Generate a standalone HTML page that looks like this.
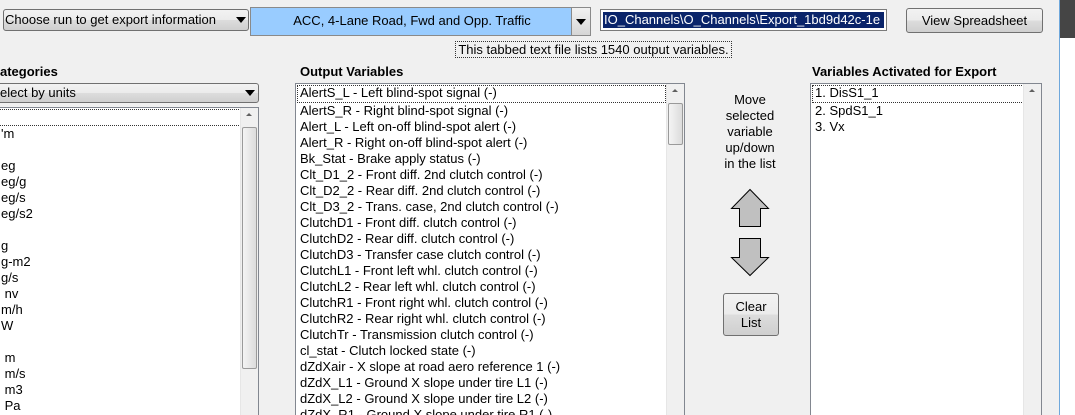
<!DOCTYPE html>
<html style="overflow:hidden;width:1075px;height:415px"><head><style>
body{margin:0;width:1075px;height:415px;overflow:hidden;background:#f0f0f0;font-family:"Liberation Sans",sans-serif;font-size:13px;color:#000;position:relative}
.a{position:absolute;box-sizing:border-box}
.btn{border:1px solid #707070;border-radius:3px;background:linear-gradient(#f2f2f2 0,#ebebeb 50%,#dddddd 50%,#cfcfcf 100%);text-align:center}
.lb{background:#fff;border:1px solid #828790;overflow:hidden}
.sb{position:absolute;top:0;bottom:0;right:0;width:17px;background:#f0f0f0;border-left:1px solid #e6e6e6}
.thumb{position:absolute;left:1px;right:1px;border:1px solid #9a9a9a;border-radius:2px;background:linear-gradient(90deg,#f4f4f4,#dcdcdc)}
.up{position:absolute;top:5px;left:5px;width:0;height:0;border-left:3px solid transparent;border-right:3px solid transparent;border-bottom:3px solid #606060}
.row{height:16px;line-height:16px;white-space:nowrap}
.h{font-weight:bold;font-size:13px}
.tri{position:absolute;width:0;height:0;border-left:5px solid transparent;border-right:5px solid transparent;border-top:6px solid #000}
</style></head><body>
<div class="a btn" style="left:3px;top:9px;width:246px;height:22px;text-align:left;padding-left:1px;line-height:20px;font-size:13px">Choose run to get export information<div class="tri" style="left:232px;top:7px"></div></div>
<div class="a" style="left:250px;top:7px;width:341px;height:29px;border:1px solid #8a8a8a;background:#99ccff"><div style="position:absolute;left:0;width:322px;text-align:center;line-height:26px;font-size:13px">ACC, 4-Lane Road, Fwd and Opp. Traffic</div><div style="position:absolute;right:0;top:0;width:18px;height:27px;background:linear-gradient(#f2f2f2,#d6d6d6);border-left:1px solid #8a8a8a"><div class="tri" style="left:4px;top:11px"></div></div></div>
<div class="a" style="left:600px;top:9px;width:287px;height:22px;border:1px solid #7a7a7a;background:#fff;padding:2px"><div style="background:#0a246a;color:#fff;height:16px;line-height:16px;font-size:13px;white-space:nowrap;overflow:hidden;padding-left:1px">IO_Channels\O_Channels\Export_1bd9d42c-1e</div></div>
<div class="a btn" style="left:906px;top:8px;width:137px;height:25px;line-height:23px;font-size:13px">View Spreadsheet</div>
<div class="a" style="left:455px;top:41px;width:277px;height:17px;border:1px dotted #333;line-height:15px;text-align:center;white-space:nowrap">This tabbed text file lists 1540 output variables.</div>
<div class="a h" style="left:0;top:64px">ategories</div>
<div class="a h" style="left:300px;top:64px">Output Variables</div>
<div class="a h" style="left:812px;top:64px">Variables Activated for Export</div>
<div class="a btn" style="left:-5px;top:83px;width:264px;height:20px;text-align:left;line-height:18px;padding-left:4px;font-size:13px">elect by units<div class="tri" style="left:249px;top:6px"></div></div>
<div class="a lb" style="left:-2px;top:107px;width:261px;height:320px;padding:1px 0 0 0">
<div class="sb"><div class="up"></div><div class="thumb" style="top:19px;height:240px"></div></div>
<div class="row" style="border:1px dotted #333;width:240px;height:15px"></div>
<div style="padding-left:2px">
<div class="row">'m</div><div class="row"></div><div class="row">eg</div><div class="row">eg/g</div><div class="row">eg/s</div><div class="row">eg/s2</div><div class="row"></div><div class="row">g</div><div class="row">g-m2</div><div class="row">g/s</div><div class="row">&nbsp;nv</div><div class="row">m/h</div><div class="row">W</div><div class="row"></div><div class="row">&nbsp;m</div><div class="row">&nbsp;m/s</div><div class="row">&nbsp;m3</div><div class="row">&nbsp;Pa</div></div></div>
<div class="a lb" style="left:295px;top:83px;width:390px;height:340px;padding:1px 0 0 1px">
<div class="sb"><div class="up"></div><div class="thumb" style="top:19px;height:40px"></div></div>
<div style="padding-left:3px">
<div class="row" style="border:1px dotted #333;width:365px;height:16px;margin-left:-3px;padding-left:2px;line-height:14px">AlertS_L - Left blind-spot signal (-)</div>
<div class="row">AlertS_R - Right blind-spot signal (-)</div>
<div class="row">Alert_L - Left on-off blind-spot alert (-)</div>
<div class="row">Alert_R - Right on-off blind-spot alert (-)</div>
<div class="row">Bk_Stat - Brake apply status (-)</div>
<div class="row">Clt_D1_2 - Front diff. 2nd clutch control (-)</div>
<div class="row">Clt_D2_2 - Rear diff. 2nd clutch control (-)</div>
<div class="row">Clt_D3_2 - Trans. case, 2nd clutch control (-)</div>
<div class="row">ClutchD1 - Front diff. clutch control (-)</div>
<div class="row">ClutchD2 - Rear diff. clutch control (-)</div>
<div class="row">ClutchD3 - Transfer case clutch control (-)</div>
<div class="row">ClutchL1 - Front left whl. clutch control (-)</div>
<div class="row">ClutchL2 - Rear left whl. clutch control (-)</div>
<div class="row">ClutchR1 - Front right whl. clutch control (-)</div>
<div class="row">ClutchR2 - Rear right whl. clutch control (-)</div>
<div class="row">ClutchTr - Transmission clutch control (-)</div>
<div class="row">cl_stat - Clutch locked state (-)</div>
<div class="row">dZdXair - X slope at road aero reference 1 (-)</div>
<div class="row">dZdX_L1 - Ground X slope under tire L1 (-)</div>
<div class="row">dZdX_L2 - Ground X slope under tire L2 (-)</div>
<div class="row">dZdX_R1 - Ground X slope under tire R1 (-)</div>
</div></div>
<div class="a" style="left:712px;top:92px;width:76px;text-align:center;line-height:16px;font-size:13px">Move<br>selected<br>variable<br>up/down<br>in the list</div>
<svg class="a" style="left:728px;top:186px" width="44" height="94"><path d="M3.5 22.5 L22 3.5 L40.5 22.5 L32.5 22.5 L32.5 40.5 L11.5 40.5 L11.5 22.5 Z" fill="#c0c0c0" stroke="#000"/><path d="M11.5 52.5 L32.5 52.5 L32.5 71.5 L40.5 71.5 L22 89.5 L3.5 71.5 L11.5 71.5 Z" fill="#c0c0c0" stroke="#000"/></svg>
<div class="a btn" style="left:723px;top:293px;width:56px;height:43px;line-height:16px;padding-top:5px;font-size:13px">Clear<br>List</div>
<div class="a lb" style="left:810px;top:83px;width:232px;height:340px;padding:1px 0 0 1px">
<div class="sb"><div class="up"></div></div>
<div style="padding-left:3px">
<div class="row" style="border:1px dotted #333;width:208px;height:16px;margin-left:-3px;padding-left:2px;line-height:14px">1. DisS1_1</div>
<div class="row">2. SpdS1_1</div>
<div class="row">3. Vx</div></div></div>
<div class="a" style="left:1059px;top:0;width:1px;height:415px;background:#6fa8dc"></div>
<div class="a" style="left:1060px;top:0;width:15px;height:38px;background:#454545"></div>
<div class="a" style="left:1060px;top:38px;width:15px;height:377px;background:#fff"></div>
</body></html>
